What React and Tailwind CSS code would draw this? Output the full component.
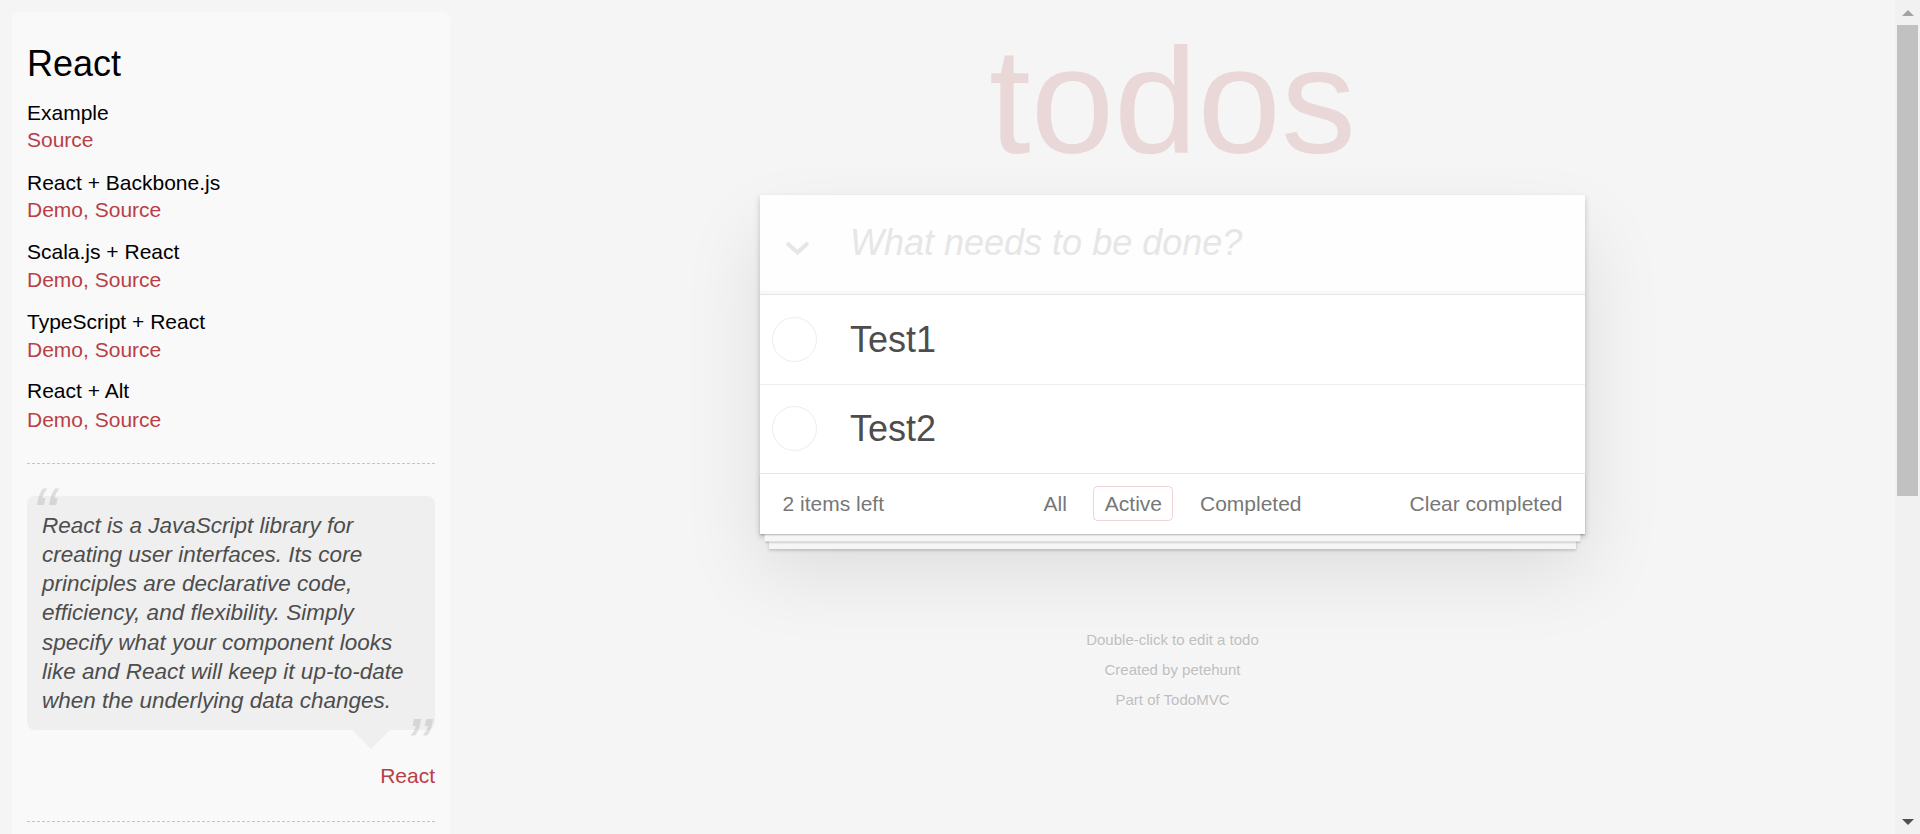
import React from "react";

const groups = [
  { title: "Example", links: ["Source"], gap: "mt-[15px]", h5: "" },
  { title: "React + Backbone.js", links: ["Demo", "Source"], gap: "mt-[16.3px]", h5: "" },
  { title: "Scala.js + React", links: ["Demo", "Source"], gap: "mt-[14.5px]", h5: "mb-[1.2px]" },
  { title: "TypeScript + React", links: ["Demo", "Source"], gap: "mt-[14.8px]", h5: "mb-[1.2px]" },
  { title: "React + Alt", links: ["Demo", "Source"], gap: "mt-[14.3px]", h5: "mb-[1.2px]" },
];

const resources = [
  { title: "Official Resources", links: ["Tutorial", "Philosophy", "Support", "Flux architecture example"] },
  { title: "Community", links: ["ReactJS on Stack Overflow", "Google Groups Mailing List", "IRC"] },
];

const todos = ["Test1", "Test2"];

const Divider = ({ className = "" }) => (
  <div className={`h-0 border-t-[1.5px] border-b-[1.5px] border-dashed border-t-[#c5c5c5] border-b-[#f7f7f7] ${className}`} />
);

const Sidebar = () => (
  <aside className="ml-[12px] mt-[12px] w-[438px] h-[1350px] shrink-0 overflow-hidden rounded-[7.5px] bg-[#f9f9f9] p-[15px]">
    <h3 className="mt-[15px] text-[36px] leading-[1.2] text-black">React</h3>

    <div className="mb-[29px]">
      {groups.map((g, i) => (
        <div key={i} className={g.gap}>
          <h5 className={`text-[21px] leading-[26px] text-black ${g.h5}`}>{g.title}</h5>
          <p className="text-[21px] leading-[28px] text-[#b83f45]">
            {g.links.map((l, j) => (
              <span key={j}>
                {j > 0 && ", "}
                <a href="#">{l}</a>
              </span>
            ))}
          </p>
        </div>
      ))}
    </div>

    <Divider />

    {/* quote */}
    <div className="mt-[31px]">
      <div className="relative rounded-[7.5px] bg-[rgba(0,0,0,0.04)] p-[15px]">
        <span className="absolute top-[-30px] left-[4.5px] text-[75px] leading-[97.5px] italic text-[#4d4d4d] opacity-15">“</span>
        <p className="text-[22.5px] leading-[1.3] italic text-[#4d4d4d]">
          React is a JavaScript library for creating user interfaces. Its core principles are declarative code, efficiency, and flexibility. Simply specify what your component looks like and React will keep it up-to-date when the underlying data changes.
        </p>
        <span className="absolute bottom-[-63px] right-[4.5px] text-[75px] leading-[97.5px] italic text-[#4d4d4d] opacity-15">”</span>
        <div className="absolute top-full right-[45px] h-0 w-0 border-[19.5px] border-transparent border-t-[rgba(0,0,0,0.04)]" />
      </div>
      <div className="mt-[32px] text-right text-[21px] leading-[28px] text-[#b83f45]">
        <a href="#">React</a>
      </div>
    </div>

    <Divider className="mt-[30.5px]" />

    {resources.map((r, i) => (
      <div key={i} className="mt-[30px]">
        <h4 className="mb-[15px] text-[27px] leading-[1.2] text-black">{r.title}</h4>
        <ul className="ml-[37.5px] mb-[45px] list-disc text-[21px] text-[#4d4d4d]">
          {r.links.map((l, j) => (
            <li key={j} className="leading-[30px]">
              <a href="#" className="text-[#b83f45]">{l}</a>
            </li>
          ))}
        </ul>
      </div>
    ))}
  </aside>
);

const Chevron = () => (
  <svg width="25" height="14" viewBox="0 0 25 14" className="ml-[25px] mt-[6px]">
    <polyline points="2,2 12.5,11.5 23,2" fill="none" stroke="#e6e6e6" strokeWidth="4" />
  </svg>
);

const TodoApp = () => (
  <main className="ml-[310px] w-[825px] shrink-0">
    <div className="h-[195px] pt-[26px]">
      <h1 className="text-center text-[150px] leading-none font-thin text-[rgba(175,47,47,0.15)]">todos</h1>
    </div>

    <section className="bg-white shadow-[0_3px_6px_0_rgba(0,0,0,0.2),0_37.5px_75px_0_rgba(0,0,0,0.1)]">
      <header className="flex h-[99px] items-center bg-[rgba(0,0,0,0.003)] shadow-[inset_0_-3px_1.5px_rgba(0,0,0,0.03)]">
        <div className="w-[90px] shrink-0">
          <Chevron />
        </div>
        <input
          className="mb-[4px] flex-1 bg-transparent pr-[24px] text-[36px] leading-[50px] text-[#4d4d4d] outline-none placeholder:italic placeholder:text-[#e6e6e6]"
          placeholder="What needs to be done?"
        />
      </header>

      <ul className="border-t-[1.5px] border-[#e6e6e6]">
        {todos.map((t, i) => (
          <li
            key={i}
            className={`flex items-center ${i < todos.length - 1 ? "h-[89.7px] border-b-[1.5px] border-[#ededed]" : "h-[88.2px]"}`}
          >
            <div className="ml-[12px] h-[45px] w-[45px] shrink-0 rounded-full border-[1.5px] border-[#ededed]" />
            <label className="ml-[33px] text-[36px] leading-[1.2] text-[#4d4d4d]">{t}</label>
          </li>
        ))}
      </ul>

      <footer className="grid grid-cols-[1fr_auto_1fr] items-center border-t-[1.5px] border-[#e6e6e6] px-[22.5px] py-[15px] text-[21px] leading-[30px] text-[#777] shadow-[0_1.5px_1.5px_rgba(0,0,0,0.2),0_12px_0_-4.5px_#f6f6f6,0_13.5px_1.5px_-4.5px_rgba(0,0,0,0.2),0_24px_0_-9px_#f6f6f6,0_25.5px_3px_-9px_rgba(0,0,0,0.2)]">
        <span>
          <strong className="font-normal">2</strong> items left
        </span>
        <div className="flex h-[30px] items-center gap-[15px]">
          <a href="#" className="flex h-[35px] shrink-0 items-center rounded-[4.5px] border-[1.5px] border-transparent px-[10.5px]">All</a>
          <a href="#" className="flex h-[35px] shrink-0 items-center rounded-[4.5px] border-[1.5px] border-[rgba(175,47,47,0.2)] px-[10.5px]">Active</a>
          <a href="#" className="flex h-[35px] shrink-0 items-center rounded-[4.5px] border-[1.5px] border-transparent px-[10.5px]">Completed</a>
        </div>
        <button className="justify-self-end text-[21px] leading-[30px] text-[#777]">Clear completed</button>
      </footer>
    </section>

    <div className="mt-[98px] text-center text-[15px] leading-[15px] text-[#bfbfbf] [text-shadow:0_1.5px_0_rgba(255,255,255,0.5)]">
      <p>Double-click to edit a todo</p>
      <p className="mt-[15px]">
        Created by <a href="#">petehunt</a>
      </p>
      <p className="mt-[15px]">
        Part of <a href="#">TodoMVC</a>
      </p>
    </div>
  </main>
);

const Scrollbar = () => (
  <div className="flex h-full w-[25px] shrink-0 flex-col bg-[#f1f1f1]">
    <div className="flex h-[25px] items-center justify-center">
      <svg width="12" height="6" viewBox="0 0 12 6">
        <polygon points="0,6 6,0 12,6" fill="#a3a3a3" />
      </svg>
    </div>
    <div className="mx-[2px] h-[471px] bg-[#c1c1c1]" />
    <div className="flex-1" />
    <div className="flex h-[25px] items-center justify-center">
      <svg width="12" height="6" viewBox="0 0 12 6">
        <polygon points="0,0 12,0 6,6" fill="#505050" />
      </svg>
    </div>
  </div>
);

export default function App() {
  return (
    <div className="flex h-screen bg-[#f5f5f5] font-['Liberation_Sans',Arial,sans-serif]">
      <div className="flex-1 overflow-y-auto [scrollbar-width:none]">
        <div className="flex items-start">
          <Sidebar />
          <TodoApp />
        </div>
      </div>
      <Scrollbar />
    </div>
  );
}
